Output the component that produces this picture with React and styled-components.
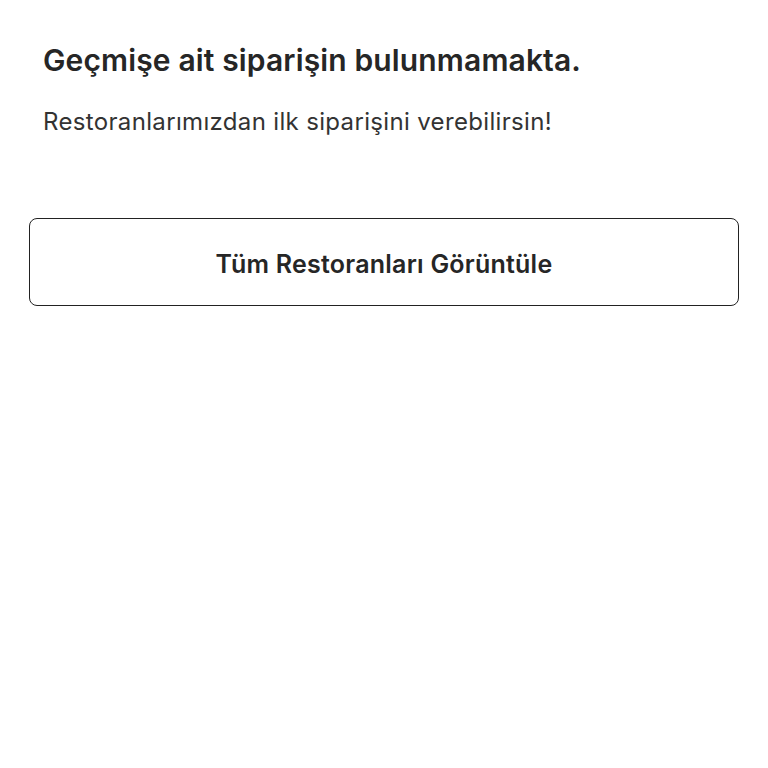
import React from 'react';
import styled, { createGlobalStyle } from 'styled-components';

const GlobalStyle = createGlobalStyle`
  body {
    margin: 0;
    background: #fff;
    font-family: Inter, "Noto Sans", sans-serif;
    color: #262626;
  }
`;

const Page = styled.div`
  padding: 39px 29px 0 29px;
`;

const Intro = styled.div`
  padding: 0 14px;
`;

const Title = styled.h1`
  margin: 0;
  font-size: 30px;
  font-weight: 600;
  line-height: 42px;
  letter-spacing: 0.14px;
`;

const Subtitle = styled.p`
  margin: 25px 0 0 0;
  font-size: 24px;
  font-weight: 400;
  line-height: 32px;
  letter-spacing: 0.34px;
  color: #333;
`;

const OutlineButton = styled.button`
  display: flex;
  align-items: center;
  justify-content: center;
  width: 100%;
  height: 88px;
  margin-top: 80px;
  padding: 3px 0 0 0;
  background: #fff;
  border: 1.5px solid #222;
  border-radius: 8px;
  font-family: Inter, "Noto Sans", sans-serif;
  font-size: 25px;
  font-weight: 600;
  letter-spacing: 0.23px;
  color: #262626;
  cursor: pointer;
`;

export default function App() {
  return (
    <>
      <GlobalStyle />
      <Page>
        <Intro>
          <Title>Geçmişe ait siparişin bulunmamakta.</Title>
          <Subtitle>Restoranlarımızdan ilk siparişini verebilirsin!</Subtitle>
        </Intro>
        <OutlineButton>Tüm Restoranları Görüntüle</OutlineButton>
      </Page>
    </>
  );
}
